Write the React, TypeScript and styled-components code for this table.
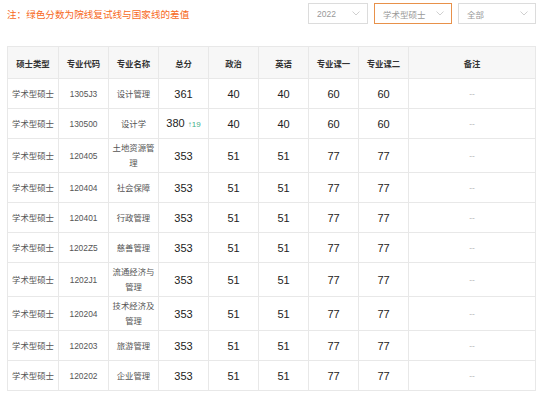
import React from 'react'
import styled, { createGlobalStyle } from 'styled-components'

const GlobalStyle = createGlobalStyle`
    body {
        margin: 0;
        background: #fff;
        font-family: "Liberation Sans", "Noto Sans CJK SC", sans-serif;
    }
`

const Page = styled.div`
    width: 541px;
    padding: 3px 5px 0 7px;
    box-sizing: border-box;
`

const TopBar = styled.div`
    display: flex;
    align-items: center;
    justify-content: space-between;
    height: 21px;
`

const Note = styled.div`
    color: #f7691c;
    font-size: 9.6px;
    margin-top: 1px;
`

const Filters = styled.div`
    display: flex;
    gap: 6px;
`

const Select = styled.div<{ $w: number; $active?: boolean }>`
    width: ${ p => p.$w }px;
    height: 21px;
    box-sizing: border-box;
    border: 1px solid ${ p => (p.$active ? '#e8914a' : '#dcdcdc') };
    display: flex;
    align-items: center;
    justify-content: space-between;
    padding: 0 7px 0 8px;
    color: #999;
    font-size: 8.5px;
`

const Chevron = () => (
    <svg width="8" height="5" viewBox="0 0 8 5">
        <path d="M0.5 0.5 L4 4 L7.5 0.5" fill="none" stroke="#c4c4c4" strokeWidth="0.8"/>
    </svg>
)

const Table = styled.table`
    margin-top: 22px;
    width: 528px;
    border-collapse: collapse;
    table-layout: fixed;
`

const HeadRow = styled.tr`
    height: 32px;
`

const BodyRow = styled.tr`
    height: 30px;
`

const Th = styled.th`
    padding: 0;
    background: #f7f7f7;
    border: 1px solid #e8e8e8;
    color: #333;
    font-size: 8.4px;
    font-weight: bold;
    text-align: center;
`

const Td = styled.td<{ $big?: boolean; $muted?: boolean }>`
    padding: 2px 2px 1px;
    border: 1px solid #e8e8e8;
    text-align: center;
    line-height: 15px;
    color: ${ p => (p.$muted ? '#bbb' : p.$big ? '#222' : '#555') };
    font-size: ${ p => (p.$big ? '11px' : '8.4px') };
`

const Diff = styled.span`
    color: #3fae8a;
    font-size: 8px;
    margin-left: 3px;
`

type Row = {
    code: string
    name: string
    total: string
    diff?: string
    pol: string
    eng: string
    c1: string
    c2: string
}

const rows: Row[] = [
    { code: '1305J3', name: '设计管理', total: '361', pol: '40', eng: '40', c1: '60', c2: '60' },
    { code: '130500', name: '设计学', total: '380', diff: '↑19', pol: '40', eng: '40', c1: '60', c2: '60' },
    { code: '120405', name: '土地资源管理', total: '353', pol: '51', eng: '51', c1: '77', c2: '77' },
    { code: '120404', name: '社会保障', total: '353', pol: '51', eng: '51', c1: '77', c2: '77' },
    { code: '120401', name: '行政管理', total: '353', pol: '51', eng: '51', c1: '77', c2: '77' },
    { code: '1202Z5', name: '慈善管理', total: '353', pol: '51', eng: '51', c1: '77', c2: '77' },
    { code: '1202J1', name: '流通经济与管理', total: '353', pol: '51', eng: '51', c1: '77', c2: '77' },
    { code: '120204', name: '技术经济及管理', total: '353', pol: '51', eng: '51', c1: '77', c2: '77' },
    { code: '120203', name: '旅游管理', total: '353', pol: '51', eng: '51', c1: '77', c2: '77' },
    { code: '120202', name: '企业管理', total: '353', pol: '51', eng: '51', c1: '77', c2: '77' },
]

const headers = [ '硕士类型', '专业代码', '专业名称', '总分', '政治', '英语', '专业课一', '专业课二', '备注' ]
const widths = [ 51, 50, 50, 50, 50, 50, 50, 50, 127 ]

const App = () => {
    return (
        <Page>
            <GlobalStyle/>
            <TopBar>
                <Note>注：绿色分数为院线复试线与国家线的差值</Note>
                <Filters>
                    <Select $w={ 60 }>2022<Chevron/></Select>
                    <Select $w={ 78 } $active>学术型硕士<Chevron/></Select>
                    <Select $w={ 78 }>全部<Chevron/></Select>
                </Filters>
            </TopBar>
            <Table>
                <colgroup>
                    { widths.map((w, i) => <col key={ i } style={ { width: w } }/>) }
                </colgroup>
                <thead>
                    <HeadRow>
                        { headers.map(h => <Th key={ h }>{ h }</Th>) }
                    </HeadRow>
                </thead>
                <tbody>
                    { rows.map(r => (
                        <BodyRow key={ r.code }>
                            <Td>学术型硕士</Td>
                            <Td>{ r.code }</Td>
                            <Td>{ r.name }</Td>
                            <Td $big>{ r.total }{ r.diff && <Diff>{ r.diff }</Diff> }</Td>
                            <Td $big>{ r.pol }</Td>
                            <Td $big>{ r.eng }</Td>
                            <Td $big>{ r.c1 }</Td>
                            <Td $big>{ r.c2 }</Td>
                            <Td $muted>--</Td>
                        </BodyRow>
                    )) }
                </tbody>
            </Table>
        </Page>
    )
}

export default App
